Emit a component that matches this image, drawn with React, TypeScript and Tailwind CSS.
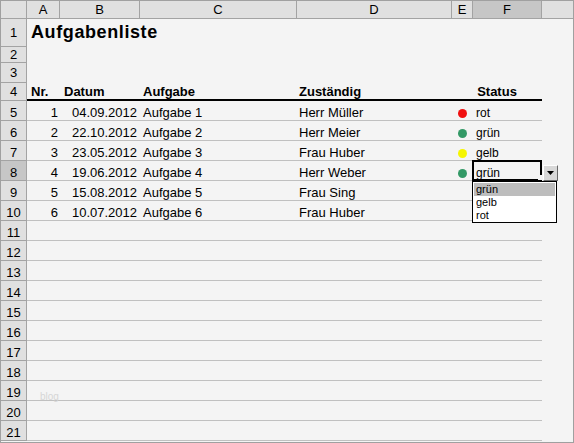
import React from 'react';

type Task = {
    n: number;
    nr: number;
    date: string;
    task: string;
    who: string;
    status: string;
    dot: string;
};

const tasks: Task[] = [
    { n: 5, nr: 1, date: '04.09.2012', task: 'Aufgabe 1', who: 'Herr Müller', status: 'rot', dot: 'bg-[#f01010]' },
    { n: 6, nr: 2, date: '22.10.2012', task: 'Aufgabe 2', who: 'Herr Meier', status: 'grün', dot: 'bg-[#339966]' },
    { n: 7, nr: 3, date: '23.05.2012', task: 'Aufgabe 3', who: 'Frau Huber', status: 'gelb', dot: 'bg-[#f5f500]' },
    { n: 8, nr: 4, date: '19.06.2012', task: 'Aufgabe 4', who: 'Herr Weber', status: 'grün', dot: 'bg-[#339966]' },
    { n: 9, nr: 5, date: '15.08.2012', task: 'Aufgabe 5', who: 'Frau Sing', status: '', dot: '' },
    { n: 10, nr: 6, date: '10.07.2012', task: 'Aufgabe 6', who: 'Frau Huber', status: '', dot: '' },
];

const emptyRows = [11, 12, 13, 14, 15, 16, 17, 18, 19, 20, 21];

const RowHead: React.FC<{ n: number; sel?: boolean; low?: boolean }> = ({ n, sel, low }) => (
    <div
        className={`w-[26px] shrink-0 flex justify-center border-r border-b border-[#a3a3a3] leading-[14px] ${
            sel ? 'bg-[#c6c6c6]' : 'bg-[#e0e0e0]'
        } ${low ? 'items-end' : 'items-center'}`}
    >
        {n}
    </div>
);

const ColHead: React.FC<{ label: string; w: string; sel?: boolean }> = ({ label, w, sel }) => (
    <div
        className={`${w} shrink-0 flex items-center justify-center border-r border-[#a3a3a3] ${
            sel ? 'bg-[#c6c6c6]' : 'bg-[#e0e0e0]'
        }`}
    >
        {label}
    </div>
);

const StatusDropdown: React.FC = () => (
    <>
        {/* active cell frame */}
        <div className="absolute left-[-1px] top-[-1px] w-[70px] h-[21px] border-2 border-black" />
        <div className="absolute right-[0px] bottom-[0px] w-[4px] h-[5px] bg-[#f4f4f4]" />
        {/* dropdown button */}
        <div className="absolute left-[70px] top-[4px] w-[15px] h-[16px] bg-[#d8d8d8] border border-t-white border-l-white border-r-[#6a6a6a] border-b-[#6a6a6a] flex items-center justify-center">
            <svg width="7" height="4" viewBox="0 0 7 4">
                <path d="M0 0 H7 L3.5 4 Z" fill="#000" />
            </svg>
        </div>
        {/* list */}
        <div className="absolute left-[-1px] top-[20px] w-[85px] bg-white border border-black text-[11px] leading-[13px] z-10">
            <div className="h-[13px] mx-[1px] mt-[1px] pl-[2px] bg-[#bdbdbd]">grün</div>
            <div className="h-[13px] pl-[3px]">gelb</div>
            <div className="h-[13px] pl-[3px]">rot</div>
        </div>
    </>
);

export default function App() {
    return (
        <div className="w-[574px] h-[443px] overflow-hidden bg-[#f4f4f4] border border-[#a0a0a0] text-[13px] text-black font-['Liberation_Sans',Arial,sans-serif] flex flex-col">
            {/* column headers */}
            <div className="flex h-[18px] shrink-0 border-b border-[#a3a3a3] bg-[#e0e0e0]">
                <div className="w-[26px] shrink-0 border-r border-[#a3a3a3]" />
                <ColHead label="A" w="w-[33px]" />
                <ColHead label="B" w="w-[80px]" />
                <ColHead label="C" w="w-[157px]" />
                <ColHead label="D" w="w-[155px]" />
                <ColHead label="E" w="w-[21px]" />
                <ColHead label="F" w="w-[69px]" sel />
                <div className="flex-1" />
            </div>

            {/* row 1: title */}
            <div className="flex h-[28px] shrink-0">
                <RowHead n={1} />
                <div className="flex items-center pb-[3px] pl-[4px] whitespace-nowrap text-[18px] font-bold leading-[20px] tracking-[0.6px]">
                    Aufgabenliste
                </div>
            </div>
            <div className="flex h-[16px] shrink-0">
                <RowHead n={2} />
            </div>
            <div className="flex h-[20px] shrink-0">
                <RowHead n={3} />
            </div>

            {/* row 4: table header */}
            <div className="flex h-[18px] shrink-0">
                <RowHead n={4} />
                <div className="flex w-[515px] border-b-2 border-black font-bold leading-[14px]">
                    <div className="w-[33px] flex items-end pl-[4px]">Nr.</div>
                    <div className="w-[80px] flex items-end pl-[4px]">Datum</div>
                    <div className="w-[157px] flex items-end pl-[3px]">Aufgabe</div>
                    <div className="w-[155px] flex items-end pl-[2px]">Zuständig</div>
                    <div className="w-[90px] flex items-end justify-center">Status</div>
                </div>
            </div>

            {/* data rows */}
            {tasks.map((t) => (
                <div key={t.n} className="flex h-[20px] shrink-0">
                    <RowHead n={t.n} sel={t.n === 8} low />
                    <div className="flex w-[515px] border-b border-[#c0c0c0] leading-[14px]">
                        <div className="w-[33px] flex items-end justify-end pr-[2px]">{t.nr}</div>
                        <div className="w-[80px] flex items-end justify-end pr-[3px]">{t.date}</div>
                        <div className="w-[157px] flex items-end pl-[3px]">{t.task}</div>
                        <div className="w-[155px] flex items-end pl-[2px]">{t.who}</div>
                        <div className="w-[21px] flex items-end justify-center pb-[2px]">
                            {t.dot && <span className={`w-[9px] h-[9px] rounded-full ${t.dot}`} />}
                        </div>
                        <div className="w-[69px] relative flex items-end pl-[3px] text-[12px]">
                            {t.status}
                            {t.n === 8 && <StatusDropdown />}
                        </div>
                    </div>
                </div>
            ))}

            {/* empty rows */}
            {emptyRows.map((n) => (
                <div key={n} className="flex h-[20px] shrink-0">
                    <RowHead n={n} low />
                    <div className="flex w-[515px] border-b border-[#c0c0c0]">
                        <div className="w-[33px] relative">
                            {n === 19 && (
                                <span className="absolute left-[13px] top-[10px] text-[10px] leading-[12px] text-[#d6d6d6]">
                                    blog
                                </span>
                            )}
                        </div>
                    </div>
                </div>
            ))}
        </div>
    );
}
